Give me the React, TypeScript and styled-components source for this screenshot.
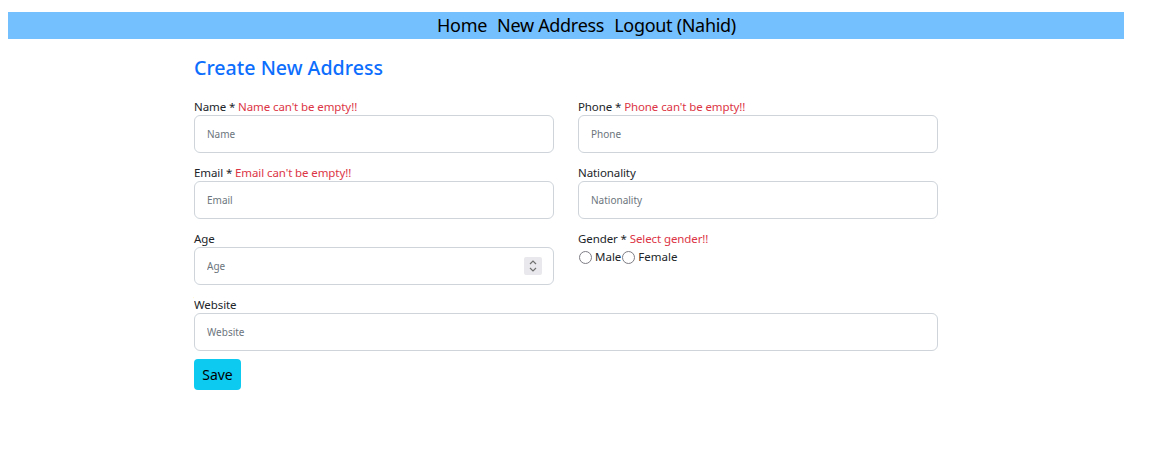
import React from "react";
import styled, { createGlobalStyle } from "styled-components";

const Global = createGlobalStyle`
  body {
    margin: 8px;
    font-family: "Noto Sans", "Open Sans", sans-serif;
    background: #fff;
    color: #212529;
  }
  * { box-sizing: border-box; }
`;

const NavBar = styled.nav`
  margin-top: 4px;
  width: 1116px;
  height: 27px;
  padding-left: 41px;
  background: #74bffd;
  display: flex;
  justify-content: center;
  align-items: center;
  gap: 10px;
`;

const NavLink = styled.a`
  font-size: 18px;
  line-height: 25px;
  color: #000;
  text-decoration: none;
  letter-spacing: -0.3px;
`;

const Container = styled.main`
  width: 744px;
  margin-left: 186px;
  padding-top: 17px;
`;

const Title = styled.h2`
  margin: 0 0 17px 0;
  font-size: 19.6px;
  line-height: 24px;
  font-weight: 500;
  color: #0d6efd;
`;

const FormGrid = styled.form`
  display: grid;
  grid-template-columns: 360px 360px;
  column-gap: 24px;
  row-gap: 10px;
`;

const Field = styled.div<{ $wide?: boolean }>`
  display: flex;
  flex-direction: column;
  grid-column: ${(p) => (p.$wide ? "1 / span 2" : "auto")};
`;

const Label = styled.label`
  font-size: 11.5px;
  letter-spacing: -0.1px;
  line-height: 20px;
  height: 18px;
`;

const ErrorText = styled.span`
  color: #dc3545;
`;

const Input = styled.input`
  height: 38px;
  width: 100%;
  border: 1px solid #ced4da;
  border-radius: 6px;
  padding: 0 12px;
  font-family: inherit;
  font-size: 10px;
  color: #212529;
  outline: none;
  &::placeholder {
    color: #6c757d;
  }
  &::-webkit-inner-spin-button,
  &::-webkit-outer-spin-button {
    -webkit-appearance: none;
    margin: 0;
  }
`;

const InputWrap = styled.div`
  position: relative;
`;

const Spinner = styled.div`
  position: absolute;
  right: 12px;
  top: 10px;
  width: 18px;
  height: 18px;
  background: #e9e9ed;
  border-radius: 2px;
  display: flex;
  align-items: center;
  justify-content: center;
`;

const RadioRow = styled.div`
  display: flex;
  align-items: center;
  font-size: 11.5px;
  line-height: 20px;
`;

const RadioLabel = styled.label`
  display: flex;
  align-items: center;
`;

const Radio = styled.input`
  width: 13px;
  height: 13px;
  margin: 0 3px 0 1px;
  appearance: none;
  -webkit-appearance: none;
  border: 1.6px solid #7d7d85;
  border-radius: 50%;
  background: #fff;
`;

const SaveButton = styled.button`
  margin-top: 8px;
  width: 47px;
  height: 31px;
  border: none;
  border-radius: 4px;
  background: #0dcaf0;
  color: #000;
  font-family: inherit;
  font-size: 14px;
  padding: 0;
`;

export default function App() {
  return (
    <>
      <Global />
      <NavBar>
        <NavLink href="#">Home</NavLink>
        <NavLink href="#">New Address</NavLink>
        <NavLink href="#">Logout (Nahid)</NavLink>
      </NavBar>
      <Container>
        <Title>Create New Address</Title>
        <FormGrid onSubmit={(e) => e.preventDefault()}>
          <Field>
            <Label>
              Name * <ErrorText>Name can't be empty!!</ErrorText>
            </Label>
            <Input placeholder="Name" />
          </Field>
          <Field>
            <Label>
              Phone * <ErrorText>Phone can't be empty!!</ErrorText>
            </Label>
            <Input placeholder="Phone" />
          </Field>
          <Field>
            <Label>
              Email * <ErrorText>Email can't be empty!!</ErrorText>
            </Label>
            <Input placeholder="Email" />
          </Field>
          <Field>
            <Label>Nationality</Label>
            <Input placeholder="Nationality" />
          </Field>
          <Field>
            <Label>Age</Label>
            <InputWrap>
              <Input type="number" placeholder="Age" />
              <Spinner>
                <svg width="10" height="14" viewBox="0 0 10 14" fill="none" stroke="#707070" strokeWidth="1.2">
                  <path d="M2 5 L5 2 L8 5" />
                  <path d="M2 9 L5 12 L8 9" />
                </svg>
              </Spinner>
            </InputWrap>
          </Field>
          <Field>
            <Label>
              Gender * <ErrorText>Select gender!!</ErrorText>
            </Label>
            <RadioRow>
              <RadioLabel>
                <Radio type="radio" name="gender" />
                Male
              </RadioLabel>
              <RadioLabel>
                <Radio type="radio" name="gender" />
                Female
              </RadioLabel>
            </RadioRow>
          </Field>
          <Field $wide>
            <Label>Website</Label>
            <Input placeholder="Website" />
          </Field>
        </FormGrid>
        <SaveButton type="submit">Save</SaveButton>
      </Container>
    </>
  );
}
